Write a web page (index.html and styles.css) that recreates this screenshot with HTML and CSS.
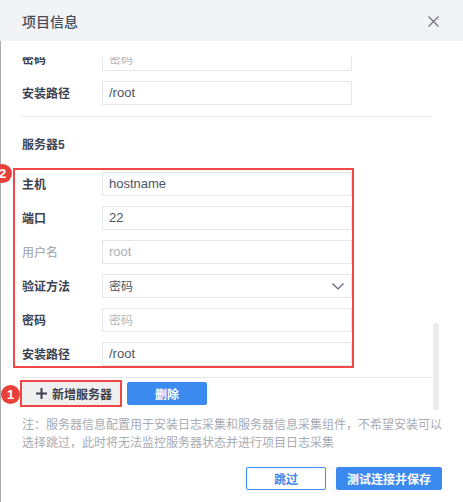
FILE: index.html
```html
<!DOCTYPE html>
<html lang="zh">
<head>
<meta charset="utf-8">
<title>项目信息</title>
<link rel="stylesheet" href="styles.css">
</head>
<body>
<div class="modal">
  <header class="head">
    <span class="title">项目信息</span>
    <svg class="close" width="11" height="11" viewBox="0 0 11 11"><path d="M0.5 0.5L10.5 10.5M10.5 0.5L0.5 10.5" stroke="#6c7282" stroke-width="1.2" fill="none"/></svg>
  </header>
  <div class="body">
    <div class="scroll">
      <div class="inner">
        <div class="row"><span class="lbl">密码</span><div class="field ph">密码</div></div>
        <div class="row"><span class="lbl">安装路径</span><div class="field">/root</div></div>
        <div class="divider first"></div>
        <div class="sec">服务器5</div>
        <div class="group">
          <div class="row"><span class="lbl">主机</span><div class="field">hostname</div></div>
          <div class="row"><span class="lbl">端口</span><div class="field">22</div></div>
          <div class="row"><span class="lbl dis">用户名</span><div class="field dis">root</div></div>
          <div class="row"><span class="lbl">验证方法</span><div class="field select"><span class="cjk">密码</span>
            <svg class="chev" width="12" height="7" viewBox="0 0 12 7"><path d="M0.5 0.5L6 6L11.5 0.5" stroke="#5b6272" stroke-width="1.2" fill="none"/></svg></div></div>
          <div class="row"><span class="lbl">密码</span><div class="field ph">密码</div></div>
          <div class="row"><span class="lbl">安装路径</span><div class="field">/root</div></div>
        </div>
        <div class="divider second"></div>
        <div class="actions">
          <button class="btn add"><svg width="11" height="11" viewBox="0 0 11 11"><path d="M5.5 0V11M0 5.5H11" stroke="#3a404c" stroke-width="2" fill="none"/></svg>新增服务器</button>
          <button class="btn primary del">删除</button>
        </div>
      </div>
      <div class="thumb"></div>
    </div>
    <p class="note">注：服务器信息配置用于安装日志采集和服务器信息采集组件，不希望安装可以选择跳过，此时将无法监控服务器状态并进行项目日志采集</p>
    <div class="foot">
      <button class="btn outline">跳过</button>
      <button class="btn primary save">测试连接并保存</button>
    </div>
  </div>
  <span class="badge b2">2</span>
  <span class="badge b1">1</span>
</div>
</body>
</html>
```
FILE: styles.css
```css
* { box-sizing: border-box; }
html, body { margin: 0; padding: 0; background: #fff; }
body {
  font-family: "Liberation Sans", "Noto Sans CJK SC", sans-serif;
  color: #3b4252;
}
.modal {
  position: relative;
  width: 463px;
  height: 502px;
  overflow: hidden;
  background: #fff;
  box-shadow: inset 1px 0 0 #a9abb0;
}
.head {
  height: 41px;
  background: #f2f3f6;
  display: flex;
  align-items: center;
  justify-content: space-between;
  padding: 0 24px 0 22px;
}
.title {
  font-size: 14px;
  font-weight: 500;
  color: #474c59;
  font-family: "Noto Sans CJK SC", sans-serif;
  line-height: 20px;
}
.close { margin-top: 1px; }
.body { padding-top: 16px; }
.scroll {
  position: relative;
  height: 353px;
  overflow: hidden;
}
.inner {
  margin-top: -10px;
  padding-left: 22px;
  width: 432px;
  display: flex;
  flex-direction: column;
}
.row {
  display: flex;
  align-items: center;
  height: 24px;
}
.inner > .row + .row { margin-top: 10px; }
.lbl {
  width: 80px;
  flex: none;
  font-size: 12px;
  font-weight: 700;
  font-family: "Noto Sans CJK SC", sans-serif;
  color: #3b4252;
  line-height: 16px;
}
.lbl.dis { color: #a9acb3; font-weight: 500; }
.field {
  width: 250px;
  height: 24px;
  border: 1px solid #e4e6ea;
  padding: 0 6px;
  font-size: 13px;
  line-height: 22px;
  color: #4c5466;
  display: flex;
  align-items: center;
}
.field.ph { color: #b3b6bc; font-family: "Noto Sans CJK SC", sans-serif; font-size: 12px; }
.field.dis { color: #aeb1b7; }
.field.select { justify-content: space-between; padding-right: 7px; }
.cjk { font-family: "Noto Sans CJK SC", sans-serif; font-size: 12px; }
.divider {
  height: 1px;
  background: #e6e8ec;
  width: 410px;
}
.divider.first { margin-top: 11px; }
.divider.second { margin-top: 9px; }
.sec {
  padding-top: 20px;
  font-size: 12px;
  font-weight: 700;
  line-height: 16px;
  font-family: "Liberation Sans", "Noto Sans CJK SC", sans-serif;
  color: #3f4553;
  margin-bottom: 15px;
}
.group {
  margin-left: -9px;
  width: 341px;
  border: 2px solid #f04848;
  padding: 2px 0 0 7px;
  display: flex;
  flex-direction: column;
  gap: 10px;
}
.actions {
  margin-top: 2px;
  margin-left: -2px;
  display: flex;
  align-items: center;
  gap: 5px;
}
.btn {
  font-family: "Noto Sans CJK SC", sans-serif;
  font-size: 12px;
  font-weight: 700;
  border-radius: 2px;
  padding: 0;
  cursor: pointer;
  display: flex;
  align-items: center;
  justify-content: center;
  line-height: 16px;
}
.btn.add {
  width: 102px;
  height: 27px;
  border: 2px solid #ee4545;
  border-radius: 0;
  background: #efeff0;
  color: #3a404c;
  justify-content: flex-start;
  padding-left: 14px;
  gap: 5px;
}
.btn.primary {
  background: #3b8af0;
  border: 1px solid #3b8af0;
  color: #fff;
  height: 23px;
}
.btn.del { width: 80px; }
.thumb {
  position: absolute;
  left: 433px;
  top: 266px;
  width: 6px;
  height: 90px;
  border-radius: 3px;
  background: #ececee;
}
.note {
  margin: 5px 0 0 22px;
  width: 423px;
  font-size: 12px;
  line-height: 18px;
  color: #a8abb2;
  font-family: "Noto Sans CJK SC", sans-serif;
}
.foot {
  margin-top: 16px;
  padding-right: 21px;
  display: flex;
  justify-content: flex-end;
  gap: 10px;
}
.btn.outline {
  width: 80px;
  height: 23px;
  background: #fff;
  border: 1px solid #3b8af0;
  color: #3b8af0;
}
.btn.save { width: 106px; }
.badge {
  position: absolute;
  width: 19px;
  height: 19px;
  border-radius: 50%;
  background: #e8403a;
  color: #fff;
  font-size: 13px;
  font-weight: 700;
  line-height: 19px;
  text-align: center;
}
.b2 { left: -7px; top: 164px; }
.b1 { left: 1px; top: 385px; }
```
